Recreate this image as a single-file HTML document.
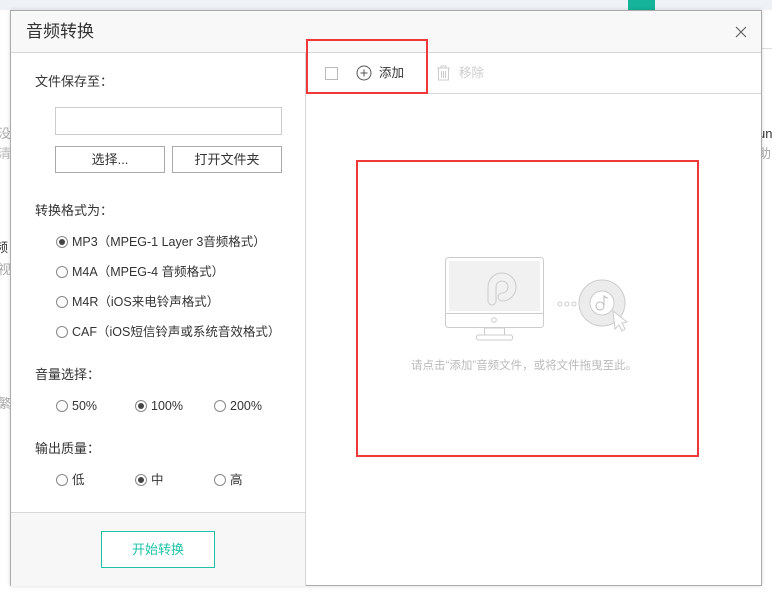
<!DOCTYPE html>
<html><head><meta charset="utf-8"><style>
*{margin:0;padding:0;box-sizing:border-box}
body{width:772px;height:596px;overflow:hidden;background:#fff;font-family:"Liberation Sans","Noto Sans CJK SC",sans-serif;position:relative;color:#333}
.abs{position:absolute}
.t{font-size:13px;color:#333;white-space:nowrap;line-height:16px}
.r{position:absolute;width:12px;height:12px;border:1px solid #888;border-radius:50%;background:#fff}
.r.on::after{content:"";position:absolute;left:2px;top:2px;width:6px;height:6px;border-radius:50%;background:#444}
.btn{position:absolute;border:1px solid #aaa;background:#fff;font-size:13px;color:#333;text-align:center}
.red{position:absolute;border:2px solid #f0373a}
</style></head><body>
<div class="abs" style="left:0;top:0;width:772px;height:10px;background:#eef1f5"></div>
<div class="abs" style="left:628px;top:0;width:27px;height:10px;background:#14b39a"></div>
<div class="abs" style="left:762px;top:48px;width:10px;height:1px;background:#ddd"></div>
<div class="abs t" style="left:-2px;top:126px;color:#aaa">没</div>
<div class="abs t" style="left:-2px;top:146px;color:#bbb">清</div>
<div class="abs t" style="left:-5px;top:240px;color:#333">频</div>
<div class="abs t" style="left:-2px;top:262px;color:#aaa">视</div>
<div class="abs t" style="left:-2px;top:396px;color:#aaa">繁</div>
<div class="abs t" style="left:758px;top:126px;color:#333">un</div>
<div class="abs t" style="left:758px;top:146px;color:#aaa">助</div>
<!-- dialog -->
<div class="abs" style="left:10px;top:10px;width:752px;height:576px;border:1px solid #aaa;background:#fff;box-shadow:0 0 4px rgba(0,0,0,.15)">
  <div class="abs" style="left:0;top:0;width:750px;height:42px;background:#f8f8f8;border-bottom:1px solid #d6d6d6"></div>
  <div class="abs" style="left:15px;top:11px;font-size:17px;line-height:20px;color:#333">音频转换</div>
  <svg class="abs" style="left:724px;top:15px" width="12" height="12"><path d="M1 1L11 11M11 1L1 11" stroke="#555" stroke-width="1"/></svg>
  <!-- left panel -->
  <div class="abs" style="left:294px;top:42px;width:1px;height:533px;background:#d6d6d6"></div>
  <div class="abs" style="left:0;top:501px;width:294px;height:74px;background:#f7f7f7;border-top:1px solid #d6d6d6"></div>
  <div class="abs t" style="left:24px;top:63px">文件保存至：</div>
  <div class="abs" style="left:44px;top:96px;width:227px;height:28px;border:1px solid #ccc"></div>
  <div class="btn" style="left:44px;top:135px;width:110px;height:27px;line-height:25px">选择...</div>
  <div class="btn" style="left:161px;top:135px;width:110px;height:27px;line-height:25px">打开文件夹</div>
  <div class="abs t" style="left:24px;top:192px">转换格式为：</div>
  <div class="r on" style="left:45px;top:225px"></div><div class="abs t" style="left:61px;top:223px;font-size:12.5px">MP3（MPEG-1 Layer 3音频格式）</div>
  <div class="r" style="left:45px;top:255px"></div><div class="abs t" style="left:61px;top:253px;font-size:12.5px">M4A（MPEG-4 音频格式）</div>
  <div class="r" style="left:45px;top:285px"></div><div class="abs t" style="left:61px;top:283px;font-size:12.5px">M4R（iOS来电铃声格式）</div>
  <div class="r" style="left:45px;top:315px"></div><div class="abs t" style="left:61px;top:313px;font-size:12.5px">CAF（iOS短信铃声或系统音效格式）</div>
  <div class="abs t" style="left:24px;top:356px">音量选择：</div>
  <div class="r" style="left:45px;top:389px"></div><div class="abs t" style="left:61px;top:387px;font-size:12.5px">50%</div>
  <div class="r on" style="left:124px;top:389px"></div><div class="abs t" style="left:140px;top:387px;font-size:12.5px">100%</div>
  <div class="r" style="left:203px;top:389px"></div><div class="abs t" style="left:219px;top:387px;font-size:12.5px">200%</div>
  <div class="abs t" style="left:24px;top:430px">输出质量：</div>
  <div class="r" style="left:45px;top:463px"></div><div class="abs t" style="left:61px;top:461px;font-size:12.5px">低</div>
  <div class="r on" style="left:124px;top:463px"></div><div class="abs t" style="left:140px;top:461px;font-size:12.5px">中</div>
  <div class="r" style="left:203px;top:463px"></div><div class="abs t" style="left:219px;top:461px;font-size:12.5px">高</div>
  <div class="abs" style="left:90px;top:520px;width:114px;height:37px;border:1px solid #1fc2a7;background:#fff;color:#1fc2a7;font-size:13px;text-align:center;line-height:35px">开始转换</div>
  <!-- right toolbar -->
  <div class="abs" style="left:295px;top:82px;width:455px;height:1px;background:#d6d6d6"></div>
  <div class="abs" style="left:314px;top:56px;width:13px;height:13px;border:1px solid #bbb"></div>
  <svg class="abs" style="left:345px;top:54px" width="16" height="16"><circle cx="8" cy="8" r="7" fill="none" stroke="#555"/><path d="M8 4.5V11.5M4.5 8H11.5" stroke="#555"/></svg>
  <div class="abs t" style="left:368px;top:54px;font-size:12.5px">添加</div>
  <svg class="abs" style="left:425px;top:54px" width="15" height="16"><path d="M1 3H14M5 3V1H10V3M2.5 3V15H12.5V3M5.5 6V13M7.5 6V13M9.5 6V13" fill="none" stroke="#ccc"/></svg>
  <div class="abs t" style="left:448px;top:54px;font-size:12.5px;color:#ccc">移除</div>
  <!-- illustration -->
  <svg class="abs" style="left:420px;top:240px" width="200" height="110">
    <rect x="14.5" y="6.5" width="98" height="70" rx="3" fill="#fff" stroke="#ccc"/>
    <rect x="18" y="10" width="91" height="50" fill="#f1f1f1"/>
    <line x1="15" y1="62.5" x2="112" y2="62.5" stroke="#ccc"/>
    <circle cx="63" cy="69" r="2.3" fill="none" stroke="#ccc"/>
    <rect x="53.5" y="77" width="20" height="7" fill="#fff" stroke="#ccc"/>
    <rect x="45.5" y="84" width="36" height="5" rx="2" fill="#fff" stroke="#ccc"/>
    <path d="M61 50V36a10 10 0 1 1 10 10" fill="none" stroke="#ccc" stroke-width="9" stroke-linecap="round"/>
    <path d="M61 50V36a10 10 0 1 1 10 10" fill="none" stroke="#f1f1f1" stroke-width="7" stroke-linecap="round"/>
    <circle cx="129" cy="53" r="2" fill="none" stroke="#ccc"/>
    <circle cx="136" cy="53" r="2" fill="none" stroke="#ccc"/>
    <circle cx="143" cy="53" r="2" fill="none" stroke="#ccc"/>
    <circle cx="171" cy="52" r="23" fill="#ececec" stroke="#ccc"/>
    <circle cx="171" cy="52" r="12" fill="#fff" stroke="#ccc"/>
    <circle cx="169" cy="55" r="4" fill="none" stroke="#bbb"/>
    <path d="M173 55V45q2 2 4 2" fill="none" stroke="#bbb"/>
    <path d="M182 60L184 78L188 74L191 80L194 78L191 72L196 71Z" fill="#fff" stroke="#ccc"/>
  </svg>
  <div class="abs" style="left:400px;top:348px;font-size:11.5px;line-height:14px;color:#bbb;white-space:nowrap">请点击“添加”音频文件，或将文件拖曳至此。</div>
</div>
<div class="red" style="left:306px;top:39px;width:122px;height:55px"></div>
<div class="red" style="left:356px;top:160px;width:343px;height:297px"></div>
</body></html>
